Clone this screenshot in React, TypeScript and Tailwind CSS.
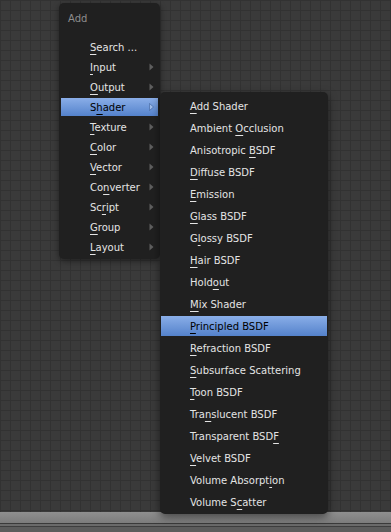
import React from "react"

type Item = { label: string; key: number; sub?: boolean; active?: boolean }

const addItems: Item[] = [
  { label: "Search ...", key: 0 },
  { label: "Input", key: 0, sub: true },
  { label: "Output", key: 0, sub: true },
  { label: "Shader", key: 1, sub: true, active: true },
  { label: "Texture", key: 0, sub: true },
  { label: "Color", key: 0, sub: true },
  { label: "Vector", key: 0, sub: true },
  { label: "Converter", key: 2, sub: true },
  { label: "Script", key: 2, sub: true },
  { label: "Group", key: 0, sub: true },
  { label: "Layout", key: 0, sub: true },
]

const shaderItems: Item[] = [
  { label: "Add Shader", key: 0 },
  { label: "Ambient Occlusion", key: 8 },
  { label: "Anisotropic BSDF", key: 12 },
  { label: "Diffuse BSDF", key: 0 },
  { label: "Emission", key: 0 },
  { label: "Glass BSDF", key: 0 },
  { label: "Glossy BSDF", key: 1 },
  { label: "Hair BSDF", key: 0 },
  { label: "Holdout", key: 4 },
  { label: "Mix Shader", key: 0 },
  { label: "Principled BSDF", key: 0, active: true },
  { label: "Refraction BSDF", key: 0 },
  { label: "Subsurface Scattering", key: 0 },
  { label: "Toon BSDF", key: 0 },
  { label: "Translucent BSDF", key: 3 },
  { label: "Transparent BSDF", key: 15 },
  { label: "Velvet BSDF", key: 0 },
  { label: "Volume Absorption", key: 14 },
  { label: "Volume Scatter", key: 8 },
]

function Label({ text, k }: { text: string; k: number }) {
  return (
    <span className="whitespace-pre">
      {text.slice(0, k)}
      <span className="underline decoration-1 underline-offset-[3px]">{text[k]}</span>
      {text.slice(k + 1)}
    </span>
  )
}

function Row({ item, h, shift }: { item: Item; h: string; shift: string }) {
  return (
    <div className={`${h} py-[1px]`}>
      <div
        className={`flex h-full items-center pl-[29px] pr-[4px] ${
          item.active
            ? "bg-linear-to-b from-[#8aaee8] to-[#5482cb] text-black"
            : "text-[#e4e4e4]"
        }`}
      >
        <span className={`flex-1 ${shift}`}>
          <Label text={item.label} k={item.key} />
        </span>
        {item.sub && (
          <svg width="5" height="8" viewBox="0 0 5 8">
            <polygon
              points="0.5,0.5 4.5,4 0.5,7.5"
              fill={item.active ? "#9fbdeb" : "#5e5e5e"}
              stroke={item.active ? "#3d5f98" : "none"}
              strokeWidth="0.6"
            />
          </svg>
        )}
      </div>
    </div>
  )
}

export default function App() {
  return (
    <div className="relative flex h-[532px] w-[391px] flex-col overflow-hidden font-['DejaVu_Sans',sans-serif] text-[10px] leading-none">
      {/* node editor grid */}
      <div className="flex-1 bg-[#3a3a3a] bg-[linear-gradient(#323232_1px,transparent_1px),linear-gradient(90deg,#323232_1px,transparent_1px)] bg-[size:10px_10px]" />

      {/* bottom header */}
      <div className="flex h-[20px] flex-col">
        <div className="h-[11px] bg-linear-to-b from-[#8f8f8f] to-[#7c7c7c]" />
        <div className="h-[1px] bg-[#3a3a3a]" />
        <div className="h-[2px] bg-[#6a6a6a]" />
        <div className="h-[1px] bg-[#3e3e3e]" />
        <div className="flex-1 bg-[#5c5c5c]" />
      </div>

      {/* Add menu */}
      <div className="absolute left-[59px] top-[3px] w-[101px] rounded-[5px] bg-[#202020] px-[2px] pb-[2px] shadow-[0_2px_6px_rgba(0,0,0,0.45)]">
        <div className="flex h-[30px] items-center pl-[7px] pt-[2px] text-[#8d8d8d]">Add</div>
        <div className="h-[4px]" />
        {addItems.map((it) => (
          <Row key={it.label} item={it} h="h-[20px]" shift="pt-[2px]" />
        ))}
      </div>

      {/* Shader submenu */}
      <div className="absolute left-[160px] top-[92px] w-[168px] rounded-[5px] bg-[#202020] px-[1px] pb-[1px] pt-[3px] shadow-[0_3px_8px_rgba(0,0,0,0.5)]">
        {shaderItems.map((it) => (
          <Row key={it.label} item={it} h="h-[22px]" shift="pt-[2px]" />
        ))}
      </div>
    </div>
  )
}
